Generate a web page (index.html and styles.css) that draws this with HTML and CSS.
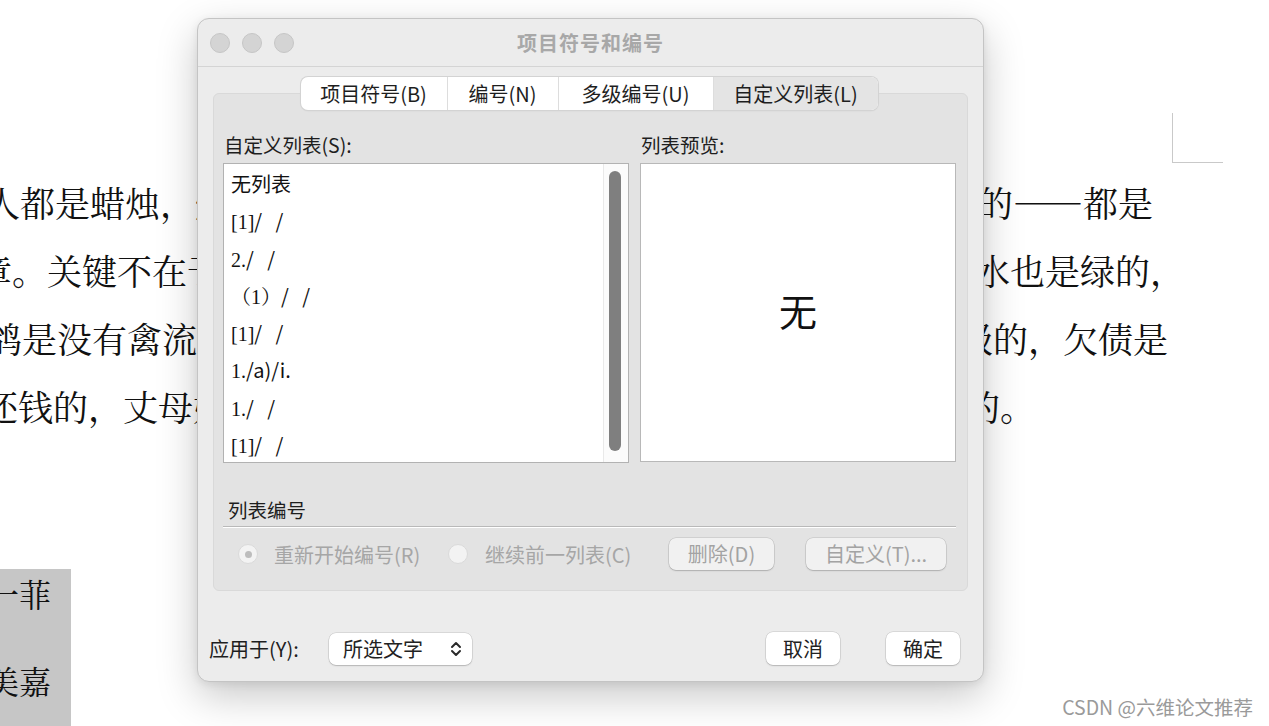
FILE: index.html
```html
<!DOCTYPE html>
<html lang="zh-CN">
<head>
<meta charset="utf-8">
<title>项目符号和编号</title>
<link rel="stylesheet" href="styles.css">
</head>
<body>
<div class="page">
  <div class="corner"></div>
  <div class="doc">
    <div class="line l1"><span class="lt">人都是蜡烛，燃烧了自己照亮了别人，其实每个人</span><span class="rt">的——都是</span></div>
    <div class="line l2"><span class="lt">章。关键不在于山是不是绿的，山是绿的，</span><span class="rt">水也是绿的，</span></div>
    <div class="line l3"><span class="lt">鸽是没有禽流感的，钱是没有等级</span><span class="rt">级的，欠债是</span></div>
    <div class="line l4"><span class="lt">还钱的，丈母娘是要见的，这是一定</span><span class="rt">的。</span></div>
  </div>
  <div class="cell">
    <div class="c1">胡一菲</div>
    <div class="c2">陈美嘉</div>
  </div>
</div>

<div class="dialog">
  <div class="titlebar">
    <div class="lights"><i></i><i></i><i></i></div>
    <div class="title">项目符号和编号</div>
    <div></div>
  </div>
  <div class="content">
    <div class="tabs">
      <span class="t1">项目符号(B)</span>
      <span class="t2">编号(N)</span>
      <span class="t3">多级编号(U)</span>
      <span class="t4 sel">自定义列表(L)</span>
    </div>
    <div class="panel">
      <div class="cols">
        <div class="colL">
          <div class="lbl">自定义列表(S):</div>
          <div class="listbox">
            <div class="items">
              <div class="item">无列表</div>
              <div class="item"><span class="ser">[1]</span>/&nbsp;&nbsp;&nbsp;/</div>
              <div class="item"><span class="ser">2.</span>/&nbsp;&nbsp;&nbsp;/</div>
              <div class="item"><span class="ser">（1）</span>/&nbsp;&nbsp;&nbsp;/</div>
              <div class="item"><span class="ser">[1]</span>/&nbsp;&nbsp;&nbsp;/</div>
              <div class="item"><span class="ser">1.</span>/a)/i.</div>
              <div class="item"><span class="ser">1.</span>/&nbsp;&nbsp;&nbsp;/</div>
              <div class="item"><span class="ser">[1]</span>/&nbsp;&nbsp;&nbsp;/</div>
            </div>
            <div class="track"><div class="thumb"></div></div>
          </div>
        </div>
        <div class="colR">
          <div class="lbl">列表预览:</div>
          <div class="preview">无</div>
        </div>
      </div>
      <div class="sect">列表编号</div>
      <div class="opts">
        <span class="radio r1 on"></span><span class="rl rl1">重新开始编号(R)</span>
        <span class="radio r2"></span><span class="rl rl2">继续前一列表(C)</span>
        <span class="btn dis b1">删除(D)</span>
        <span class="btn dis b2">自定义(T)...</span>
      </div>
    </div>
    <div class="bottom">
      <span class="apply">应用于(Y):</span>
      <span class="select">所选文字<svg class="chev" width="14" height="20" viewBox="0 0 14 20"><path d="M3 8 L7 4 L11 8 M3 12 L7 16 L11 12" fill="none" stroke="#2a2a2a" stroke-width="2" stroke-linecap="round" stroke-linejoin="round"/></svg></span>
      <span class="spacer"></span>
      <span class="btn cancel">取消</span>
      <span class="btn ok">确定</span>
    </div>
  </div>
</div>

<div class="wm">CSDN @六维论文推荐</div>
</body>
</html>
```

FILE: styles.css
```css
html, body {
  margin: 0;
  padding: 0;
}
body {
  width: 1269px;
  height: 726px;
  overflow: hidden;
  background: #ffffff;
  font-family: "Noto Sans CJK SC", "Noto Sans", sans-serif;
  position: relative;
}

/* ---------- document behind ---------- */
.page {
  padding-top: 113px;
}
.corner {
  margin-left: 1172px;
  width: 51px;
  height: 50px;
  box-sizing: border-box;
  border-left: 1px solid #c9c9c9;
  border-bottom: 1px solid #c9c9c9;
}
.doc {
  margin-top: 5px;
  font-family: "Noto Serif CJK SC", "Noto Sans CJK SC", serif;
  font-size: 35px;
  color: #111;
}
.line {
  display: flex;
  height: 68px;
  line-height: 68px;
  white-space: nowrap;
}
.lt {
  flex: 0 0 950px;
  width: 950px;
  overflow: hidden;
}
.l1 .lt { text-indent: -15px; }
.l1 .rt { margin-left: 28px; }
.l2 .lt { text-indent: -23px; }
.l2 .rt { margin-left: 25px; }
.l3 .lt { text-indent: -13px; }
.l3 .rt { margin-left: 8px; }
.l4 .lt { text-indent: -17px; }
.l4 .rt { margin-left: 15px; }

.cell {
  margin-top: 129px;
  width: 71px;
  height: 157px;
  background: #c6c6c6;
  overflow: hidden;
  font-family: "Noto Serif CJK SC", "Noto Sans CJK SC", serif;
  font-size: 32px;
  color: #111;
  white-space: nowrap;
}
.c1, .c2 {
  display: flex;
  justify-content: flex-end;
  padding-right: 20px;
  height: 48px;
  line-height: 48px;
}
.c2 { margin-top: 39px; }

/* ---------- dialog ---------- */
.dialog {
  position: absolute;
  left: 197px;
  top: 18px;
  width: 787px;
  height: 664px;
  box-sizing: border-box;
  background: #ececec;
  border: 1px solid #c4c4c4;
  border-radius: 12px;
  box-shadow: 0 14px 40px rgba(0, 0, 0, 0.22), 0 2px 8px rgba(0, 0, 0, 0.08);
  display: flex;
  flex-direction: column;
  color: #222;
  font-size: 20px;
}
.titlebar {
  height: 47px;
  border-bottom: 1px solid #d4d4d4;
  display: grid;
  grid-template-columns: 1fr auto 1fr;
  align-items: center;
}
.lights {
  display: flex;
  gap: 12px;
  padding-left: 12px;
}
.lights i {
  width: 20px;
  height: 20px;
  box-sizing: border-box;
  border-radius: 50%;
  background: #d4d4d4;
  border: 1px solid #c6c6c6;
}
.title {
  font-size: 20px;
  font-weight: 700;
  color: #a8a8a8;
  letter-spacing: 1px;
}
.content {
  padding: 10px 15px 0 15px;
  display: flex;
  flex-direction: column;
}
.tabs {
  position: relative;
  z-index: 1;
  align-self: center;
  margin-left: -3px;
  display: flex;
  height: 33px;
  background: #ffffff;
  border-radius: 7px;
  box-shadow: 0 0 0 1px #d3d3d3, 0 1px 2px rgba(0, 0, 0, 0.08);
  overflow: hidden;
}
.tabs span {
  box-sizing: border-box;
  height: 33px;
  line-height: 33px;
  text-align: center;
  font-size: 20px;
  color: #1e1e1e;
}
.tabs span + span { border-left: 1px solid #dddddd; }
.t1 { width: 146px; }
.t2 { width: 111px; }
.t3 { width: 155px; }
.t4 { width: 165px; }
.tabs .sel { background: #e4e4e4; }

.panel {
  margin-top: -17px;
  height: 498px;
  box-sizing: border-box;
  background: #e3e3e3;
  border: 1px solid #d9d9d9;
  border-radius: 6px;
  padding: 40px 11px 0 9px;
}
.cols {
  display: flex;
  gap: 11px;
}
.colL { width: 406px; }
.colR { width: 316px; }
.lbl {
  height: 22px;
  line-height: 22px;
  padding-left: 1px;
  margin-bottom: 7px;
  font-size: 19.5px;
  color: #1e1e1e;
}
.listbox {
  height: 300px;
  box-sizing: border-box;
  border: 1px solid #b2b2b2;
  background: #ffffff;
  display: flex;
}
.items {
  flex: 1;
  overflow: hidden;
  padding: 1px 0 0 7px;
}
.item {
  height: 37.25px;
  line-height: 37.25px;
  font-size: 20px;
  color: #111;
  white-space: nowrap;
}
.ser {
  font-family: "Liberation Serif", "Noto Serif CJK SC", "Noto Sans CJK SC", serif;
  font-size: 20px;
}
.track {
  width: 24px;
  border-left: 1px solid #e9e9e9;
  background: #fbfbfb;
}
.thumb {
  width: 12px;
  height: 280px;
  margin: 7px 0 0 5px;
  border-radius: 6px;
  background: #7f7f7f;
}
.preview {
  height: 299px;
  box-sizing: border-box;
  padding-bottom: 6px;
  border: 1px solid #b8b8b8;
  background: #ffffff;
  display: flex;
  align-items: center;
  justify-content: center;
  font-size: 38px;
  line-height: 1;
  color: #111;
}
.sect {
  margin-top: 36px;
  height: 22px;
  line-height: 22px;
  padding: 0 0 5px 5px;
  border-bottom: 1px solid #b9b9b9;
  box-shadow: 0 1px 0 #ffffff;
  font-size: 19.5px;
  color: #1e1e1e;
}
.opts {
  margin-top: 11px;
  height: 32px;
  display: flex;
  align-items: center;
}
.radio {
  flex: 0 0 20px;
  width: 20px;
  height: 20px;
  box-sizing: border-box;
  border-radius: 50%;
  background: #f3f3f3;
  border: 1px solid #dadada;
  display: flex;
  align-items: center;
  justify-content: center;
}
.r1 { margin-left: 15px; }
.r2 { margin-left: 16px; }
.radio.on::after {
  content: "";
  width: 7px;
  height: 7px;
  border-radius: 50%;
  background: #bdbdbd;
}
.rl {
  color: #a6a6a6;
  font-size: 20px;
  white-space: nowrap;
}
.rl1 { margin-left: 16px; width: 158px; }
.rl2 { margin-left: 17px; width: 155px; }

.btn {
  box-sizing: border-box;
  height: 32px;
  line-height: 32px;
  text-align: center;
  border-radius: 7px;
  background: #ffffff;
  box-shadow: 0 0 0 0.5px rgba(0, 0, 0, 0.16), 0 1px 1.5px rgba(0, 0, 0, 0.16);
  font-size: 20px;
  color: #222;
  white-space: nowrap;
}
.btn.dis {
  background: #f1f1f1;
  color: #a3a3a3;
}
.b1 { margin-left: 29px; width: 105px; }
.b2 { margin-left: 32px; width: 140px; }

.bottom {
  margin-top: 41px;
  margin-left: -4px;
  padding-right: 8px;
  height: 33px;
  display: flex;
  align-items: center;
}
.apply {
  width: 120px;
  font-size: 20px;
  color: #1e1e1e;
  white-space: nowrap;
}
.select {
  width: 143px;
  height: 32px;
  box-sizing: border-box;
  padding: 0 9px 0 14px;
  display: flex;
  align-items: center;
  background: #ffffff;
  border-radius: 7px;
  box-shadow: 0 0 0 0.5px rgba(0, 0, 0, 0.16), 0 1px 1.5px rgba(0, 0, 0, 0.16);
  font-size: 20px;
  color: #222;
}
.chev { margin-left: auto; }
.spacer { flex: 1; }
.cancel, .ok {
  width: 74px;
  height: 33px;
  line-height: 33px;
}
.ok { margin-left: 46px; }

/* ---------- watermark ---------- */
.wm {
  position: absolute;
  right: 16px;
  bottom: 8px;
  font-size: 19.5px;
  line-height: 22px;
  color: #9a9a9a;
  font-family: "Noto Sans CJK SC", "Noto Sans", sans-serif;
}
```
